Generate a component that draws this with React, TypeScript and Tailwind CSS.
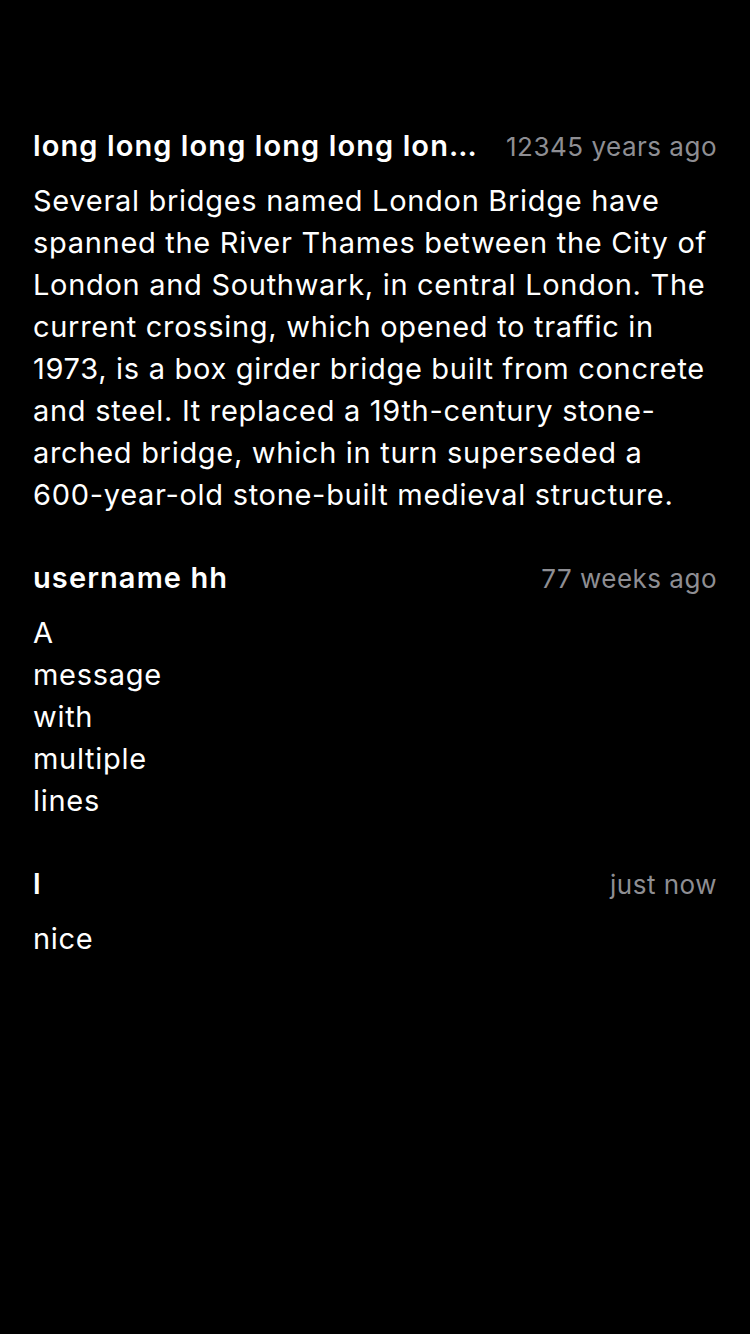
const comments = [
  {
    name: "long long long long long long long long long long name",
    time: "12345 years ago",
    body: "Several bridges named London Bridge have spanned the River Thames between the City of London and Southwark, in central London. The current crossing, which opened to traffic in 1973, is a box girder bridge built from concrete and steel. It replaced a 19th-century stone-arched bridge, which in turn superseded a 600-year-old stone-built medieval structure.",
  },
  { name: "username hh", time: "77 weeks ago", body: "A\nmessage\nwith\nmultiple\nlines" },
  { name: "l", time: "just now", body: "nice" },
];

export default function App() {
  return (
    <div
      className="min-h-[1334px] w-[750px] bg-black px-[33px] pt-[126px] text-white"
      style={{ fontFamily: "Inter, 'Liberation Sans', sans-serif" }}
    >
      {comments.map((c, i) => (
        <div key={i} className="mb-[42px]">
          <div className="flex h-[40px] items-center gap-[12px]">
            <span className="min-w-0 flex-1 truncate text-[29px] font-semibold tracking-[1.1px]">{c.name}</span>
            <span className="shrink-0 text-[26px] tracking-[0.5px] text-[#8e8e93]">{c.time}</span>
          </div>
          <p className="mt-[14px] whitespace-pre-line text-[29px] leading-[42px] tracking-[0.7px]">{c.body}</p>
        </div>
      ))}
    </div>
  );
}
